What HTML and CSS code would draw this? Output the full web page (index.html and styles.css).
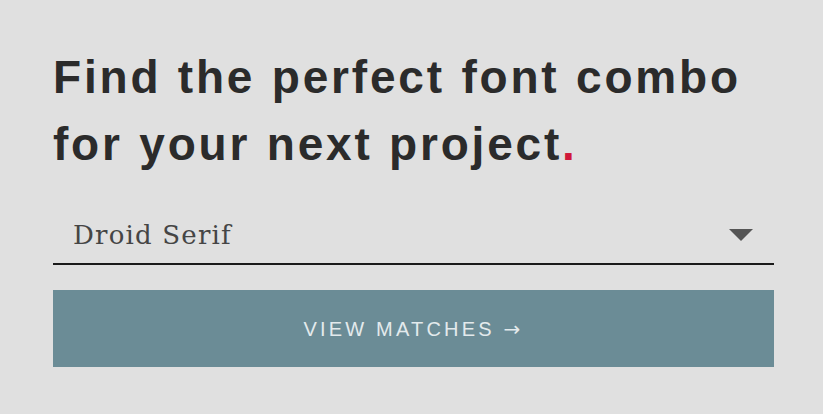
FILE: index.html
```html
<!DOCTYPE html>
<html lang="en">
<head>
<meta charset="utf-8">
<title>Font combo</title>
<link rel="stylesheet" href="styles.css">
</head>
<body>
<main class="panel">
  <h1 class="title">Find the perfect font combo for your next project<span class="dot">.</span></h1>
  <div class="select">
    <span class="select-value">Droid Serif</span>
    <span class="caret"></span>
  </div>
  <button class="cta">VIEW MATCHES <span class="arrow">&rarr;</span></button>
</main>
</body>
</html>
```

FILE: styles.css
```css
html, body {
  margin: 0;
  padding: 0;
  background: #e0e0e0;
}
.panel {
  width: 721px;
  padding: 44px 0 0 53px;
  display: flex;
  flex-direction: column;
}
.title {
  margin: 0;
  font-family: "Liberation Sans", Arial, sans-serif;
  font-weight: 700;
  font-size: 46px;
  line-height: 67px;
  letter-spacing: 2.8px;
  word-spacing: 1px;
  color: #2b2b2b;
}
.dot { color: #d0183a; }
.select {
  margin-top: 29px;
  height: 58px;
  border-bottom: 2px solid #1a1a1a;
  display: flex;
  align-items: center;
  justify-content: space-between;
  padding: 0 21px 0 20px;
  box-sizing: border-box;
}
.select-value {
  font-family: "DejaVu Serif", serif;
  font-size: 26px;
  color: #454545;
  letter-spacing: 1.2px;
}
.caret {
  width: 0;
  height: 0;
  border-left: 12px solid transparent;
  border-right: 12px solid transparent;
  border-top: 12px solid #555;
}
.cta {
  margin-top: 25px;
  height: 77px;
  border: 0;
  background: #6b8c96;
  color: #e3eaec;
  font-family: "Liberation Sans", Arial, sans-serif;
  font-size: 20px;
  letter-spacing: 3.2px;
}
.arrow { font-family: "DejaVu Sans", sans-serif; }
```
